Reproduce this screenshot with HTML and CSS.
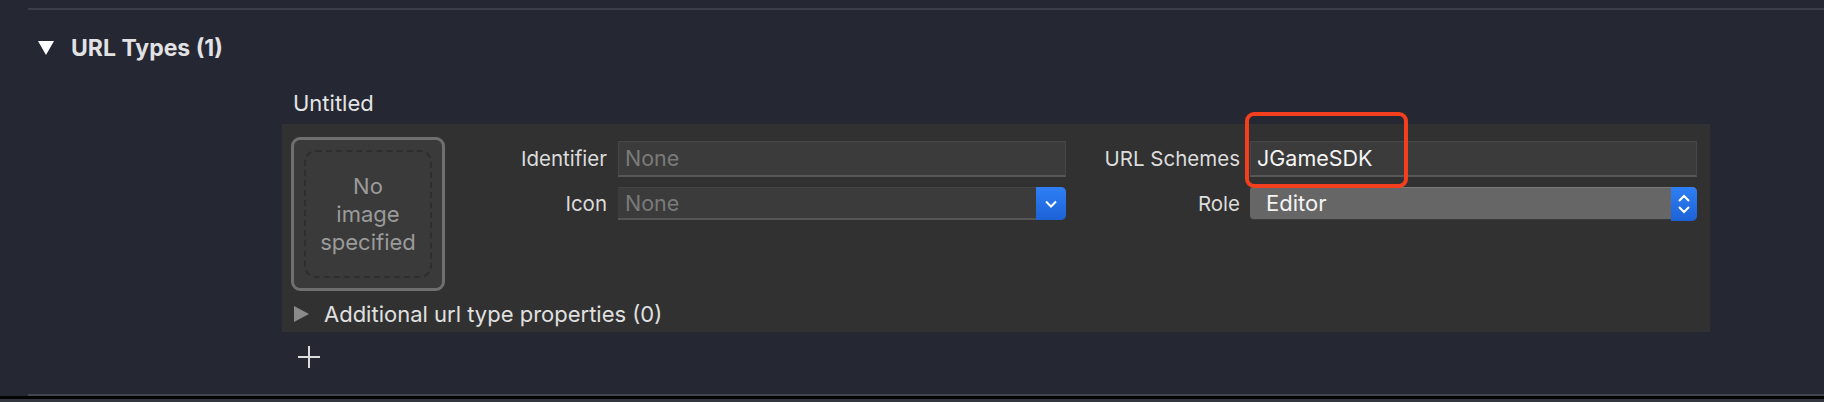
FILE: index.html
```html
<!DOCTYPE html>
<html>
<head>
<meta charset="utf-8">
<link rel="stylesheet" href="styles.css">
</head>
<body>
<div class="page">
  <div class="topline"></div>
  <div class="section-head">
    <span class="tri-down"></span>
    <span class="section-title">URL Types (1)</span>
  </div>
  <div class="content">
    <div class="item-title">Untitled</div>
    <div class="panel">
      <div class="panel-main">
        <div class="well">
          <div class="well-inner">No<br>image<br>specified</div>
        </div>
        <div class="form">
          <div class="label">Identifier</div>
          <div class="field"><span class="placeholder">None</span></div>
          <div class="label label-r">URL Schemes</div>
          <div class="field"><span class="value">JGameSDK</span></div>

          <div class="label row2">Icon</div>
          <div class="popup row2">
            <span class="placeholder">None</span>
            <span class="popbtn popbtn-wide">
              <svg width="14" height="10" viewBox="0 0 14 10"><path d="M2 2.5 L7 7.5 L12 2.5" fill="none" stroke="#ffffff" stroke-width="2"/></svg>
            </span>
          </div>
          <div class="label label-r row2">Role</div>
          <div class="popup popup-filled row2">
            <span class="value value-pop">Editor</span>
            <span class="popbtn">
              <svg width="16" height="24" viewBox="0 0 16 24"><path d="M3 9 L8 4 L13 9" fill="none" stroke="#ffffff" stroke-width="2"/><path d="M3 15 L8 20 L13 15" fill="none" stroke="#ffffff" stroke-width="2"/></svg>
            </span>
          </div>
        </div>
      </div>
      <div class="additional">
        <span class="tri-right"></span>
        <span class="additional-text">Additional url type properties (0)</span>
      </div>
    </div>
    <div class="plus"></div>
  </div>
  <div class="bottom">
    <div class="bottomline"></div>
    <div class="bottom-black"></div>
    <div class="bottom-gray"></div>
  </div>
  <div class="highlight"></div>
</div>
</body>
</html>
```
FILE: styles.css
```css
html, body {
  margin: 0;
  padding: 0;
  background: #252733;
}
body {
  font-family: Inter, "Noto Sans", sans-serif;
  color: #dedede;
  width: 1824px;
  height: 402px;
  overflow: hidden;
}
.page {
  position: relative;
  width: 1824px;
  height: 402px;
  display: flex;
  flex-direction: column;
}
.topline {
  margin-top: 8px;
  margin-left: 28px;
  height: 2px;
  background: #3c3e49;
}
.section-head {
  display: flex;
  align-items: center;
  height: 28px;
  margin-top: 24px;
  padding-left: 38px;
}
.tri-down {
  width: 0;
  height: 0;
  border-left: 8px solid transparent;
  border-right: 8px solid transparent;
  border-top: 14px solid #ffffff;
  margin-right: 17px;
}
.section-title {
  font-weight: 700;
  font-size: 23px;
  color: #e2e2e4;
}
.content {
  margin-left: 282px;
  width: 1428px;
  margin-top: 25px;
}
.item-title {
  padding-left: 11px;
  font-size: 22px;
  height: 37px;
  line-height: 32px;
  color: #e4e4e4;
}
.panel {
  background: #313131;
  height: 208px;
  box-sizing: border-box;
  padding: 13px 0 0 9px;
}
.panel-main {
  display: flex;
}
.well {
  width: 154px;
  height: 154px;
  box-sizing: border-box;
  border: 3px solid #6f6f6f;
  border-radius: 9px;
  background: #3a3a3a;
  padding: 10px;
}
.well-inner {
  width: 100%;
  height: 100%;
  box-sizing: border-box;
  border: 2px dashed #2e2e2e;
  border-radius: 12px;
  display: flex;
  align-items: center;
  justify-content: center;
  text-align: center;
  color: #9b9b9b;
  font-size: 22px;
  line-height: 28px;
}
.form {
  display: grid;
  grid-template-columns: 173px 448px 184px 447px;
  grid-template-rows: 36px 33px;
  row-gap: 10px;
  padding-top: 4px;
  align-self: flex-start;
}
.label {
  text-align: right;
  padding-right: 11px;
  font-size: 20.5px;
  line-height: 36px;
  color: #dcdcdc;
}
.label-r {
  padding-right: 10px;
}
.label.row2 {
  line-height: 33px;
}
.field {
  box-sizing: border-box;
  background: #3b3b3b;
  border: 1px solid #474747;
  border-bottom: 2px solid #575757;
  padding-left: 6px;
  font-size: 21.5px;
  line-height: 33px;
  overflow: hidden;
}
.placeholder {
  color: #7a7a7a;
}
.value {
  color: #f4f4f4;
}
.popup {
  box-sizing: border-box;
  background: #3b3b3b;
  border-top: 1px solid #444444;
  border-bottom: 2px solid #555555;
  border-radius: 0 5px 5px 0;
  display: flex;
  justify-content: space-between;
  padding-left: 7px;
  font-size: 21.5px;
  line-height: 31px;
  position: relative;
}
.popup-filled {
  background: #666666;
  border-top: 1px solid #7a7a7a;
  border-bottom: 1px solid #3a3a3a;
  border-radius: 4px 5px 5px 4px;
  padding-left: 16px;
}
.value-pop {
  font-size: 22px;
}
.popbtn {
  width: 26px;
  margin-top: -1px;
  margin-bottom: -2px;
  background: linear-gradient(#2f7ff5, #1c62d6);
  border-radius: 0 5px 5px 0;
  display: flex;
  align-items: center;
  justify-content: center;
}
.popbtn-wide {
  width: 30px;
}
.additional {
  display: flex;
  align-items: center;
  height: 24px;
  margin-top: 11px;
  padding-left: 3px;
}
.tri-right {
  width: 0;
  height: 0;
  border-top: 8px solid transparent;
  border-bottom: 8px solid transparent;
  border-left: 15px solid #8a8a8a;
  margin-right: 15px;
}
.additional-text {
  font-size: 22px;
  color: #e0e0e0;
}
.plus {
  position: relative;
  width: 22px;
  height: 22px;
  margin-top: 14px;
  margin-left: 16px;
  background:
    linear-gradient(#dcdcdc, #dcdcdc) center / 22px 2px no-repeat,
    linear-gradient(#dcdcdc, #dcdcdc) center / 2px 22px no-repeat;
}
.bottom {
  margin-top: auto;
}
.bottomline {
  margin-left: 28px;
  height: 2px;
  background: #44464f;
}
.bottom-black {
  height: 3px;
  background: #050505;
}
.bottom-gray {
  height: 3px;
  background: #34363f;
}
.highlight {
  position: absolute;
  left: 1245px;
  top: 112px;
  width: 163px;
  height: 76px;
  box-sizing: border-box;
  border: 4px solid #f43f1f;
  border-radius: 9px;
}
```
